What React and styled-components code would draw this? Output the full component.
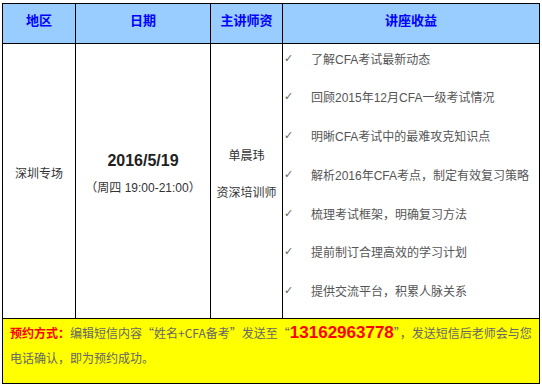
import React from "react";
import styled, { createGlobalStyle } from "styled-components";

const GlobalStyle = createGlobalStyle`
  html, body { margin: 0; padding: 0; background: #fff; }
  body { font-family: "Liberation Sans", "Noto Sans CJK SC", sans-serif; }
`;

const Page = styled.div`
  padding: 3px 0 0 2px;
`;

const Table = styled.div`
  display: grid;
  grid-template-columns: 72px 134px 71px 256px;
  grid-template-rows: 39px 274px 64px;
  gap: 1px;
  background: #000;
  border: 1px solid #000;
  width: max-content;
`;

const HeaderCell = styled.div`
  background: #99ccff;
  color: #0000ff;
  font-family: "Noto Sans CJK SC", sans-serif;
  font-weight: bold;
  font-size: 13px;
  line-height: 15px;
  display: flex;
  align-items: center;
  justify-content: center;
  padding-bottom: 8px;
`;

const BodyCell = styled.div`
  background: #fff;
  color: #333;
  font-size: 12px;
  display: flex;
  flex-direction: column;
  align-items: center;
  justify-content: center;
  gap: ${(p) => p.$gap || 0}px;
  padding-bottom: 14px;
  font-family: "Liberation Sans", "Noto Sans CJK SC", sans-serif;
`;

const Line = styled.div`
  line-height: ${(p) => p.$lh || 18}px;
  font-size: ${(p) => p.$size || 12}px;
  font-weight: ${(p) => (p.$bold ? "bold" : "normal")};
  color: ${(p) => p.$color || "#333"};
  white-space: nowrap;
`;

const BenefitCell = styled.div`
  background: #fff;
  display: flex;
  flex-direction: column;
  padding-top: 6px;
  gap: 22.8px;
`;

const Benefit = styled.div`
  display: flex;
  align-items: center;
  height: 16px;
  font-size: 12px;
  color: #555;
  white-space: nowrap;
`;

const Check = styled.span`
  width: 28px;
  padding-left: 1px;
  box-sizing: border-box;
  font-size: 11px;
  color: #666;
  font-family: "DejaVu Sans", sans-serif;
`;

const Footer = styled.div`
  grid-column: 1 / -1;
  background: #ffff00;
  padding: 1px 0 0 7px;
  font-size: 12px;
  line-height: 25px;
  color: #666;
  font-family: "Noto Sans CJK SC", sans-serif;
  white-space: nowrap;
`;

const Label = styled.span`
  color: #ff0000;
  font-weight: bold;
  font-size: 12px;
`;

const Phone = styled.span`
  color: #ff0000;
  font-weight: bold;
  font-size: 17px;
  font-family: "Liberation Sans", sans-serif;
`;

const Quote = styled.span`
  font-feature-settings: "fwid";
`;

const benefits = [
  "了解CFA考试最新动态",
  "回顾2015年12月CFA一级考试情况",
  "明晰CFA考试中的最难攻克知识点",
  "解析2016年CFA考点，制定有效复习策略",
  "梳理考试框架，明确复习方法",
  "提前制订合理高效的学习计划",
  "提供交流平台，积累人脉关系",
];

export default function App() {
  return (
    <Page lang="zh-CN">
      <GlobalStyle />
      <Table>
        <HeaderCell>地区</HeaderCell>
        <HeaderCell>日期</HeaderCell>
        <HeaderCell>主讲师资</HeaderCell>
        <HeaderCell>讲座收益</HeaderCell>

        <BodyCell>
          <Line>深圳专场</Line>
        </BodyCell>
        <BodyCell $gap={7}>
          <Line $size={16} $bold $color="#222" $lh={20}>2016/5/19</Line>
          <Line $lh={20}>（周四 19:00-21:00）</Line>
        </BodyCell>
        <BodyCell $gap={19}>
          <Line>单晨玮</Line>
          <Line>资深培训师</Line>
        </BodyCell>
        <BenefitCell>
          {benefits.map((b) => (
            <Benefit key={b}>
              <Check>✓</Check>
              {b}
            </Benefit>
          ))}
        </BenefitCell>

        <Footer>
          <Label>预约方式：</Label>编辑短信内容<Quote>“</Quote>姓名+CFA备考<Quote>”</Quote>发送至<Quote>“</Quote>
          <Phone>13162963778</Phone>
          <Quote>”</Quote>，发送短信后老师会与您
          <br />
          电话确认，即为预约成功。
        </Footer>
      </Table>
    </Page>
  );
}
